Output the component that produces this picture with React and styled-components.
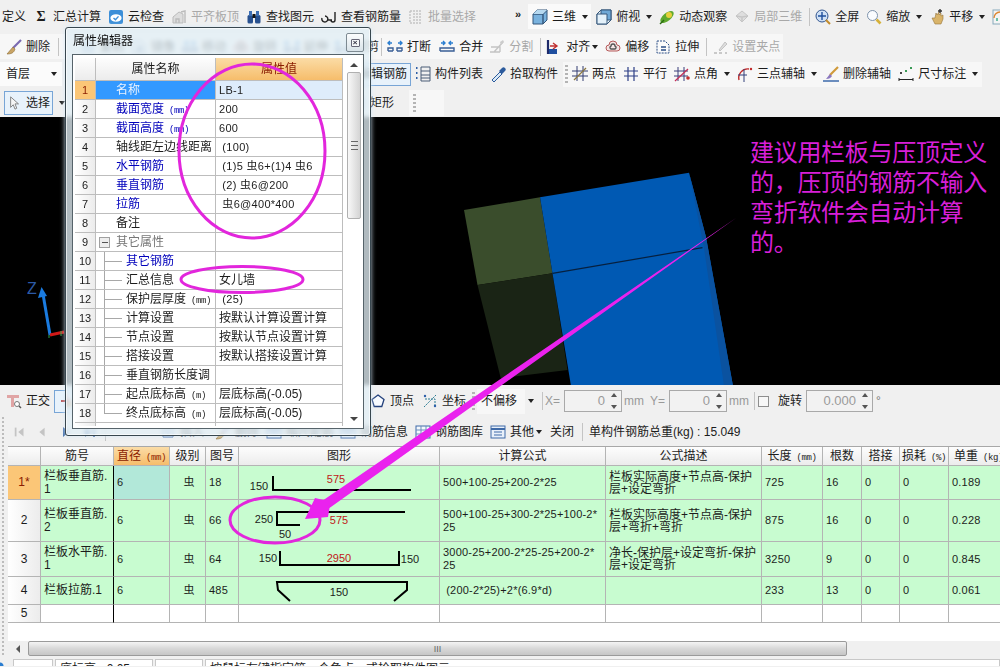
import React from 'react';
import styled, { createGlobalStyle } from 'styled-components';

const Global = createGlobalStyle`
  html, body { margin: 0; padding: 0; width: 1000px; height: 667px; overflow: hidden; background: #f0f0f0; }
  * { box-sizing: border-box; }
`;
const FONT = `"Liberation Sans", "Noto Sans CJK SC", sans-serif`;

const Page = styled.div`
  position: relative; width: 1000px; height: 667px; overflow: hidden;
  display: flex; flex-direction: column; background: #f0f0f0;
  font: 12px/14px ${FONT}; color: #1c1c1c;
`;
const Bar = styled.div`
  flex: none; height: ${p => p.$h}px; display: flex; align-items: center;
  padding-left: ${p => p.$pad || 0}px; background: #f0f0f0; white-space: nowrap;
`;
const Group = styled.div`
  display: flex; align-items: center; height: ${p => p.$h || 25}px; margin-left: ${p => p.$ml || 0}px;
  padding: 0 ${p => p.$pr || 0}px 0 ${p => p.$pl || 0}px;
  background: ${p => p.$bg || '#f7f7f7'}; flex: none;
`;
const ToolWrap = styled.span`
  display: inline-flex; align-items: center; gap: 4px; flex: none;
  margin-left: ${p => p.$ml || 0}px; color: ${p => (p.$off ? '#a8a8a8' : '#1c1c1c')};
`;
const Glyph = styled.svg`flex: none; width: ${p => p.$s || 16}px; height: ${p => p.$s || 16}px; display: block; margin-left: ${p => p.$ml || 0}px;`;
const CaretMark = styled.i`
  flex: none; width: 0; height: 0; margin-left: ${p => p.$ml ?? 6}px; margin-right: ${p => p.$mr ?? 1}px;
  border: 3px solid transparent; border-top: 4px solid #222; border-bottom: 0;
`;
const Sep = styled.i`flex: none; width: 1px; height: 18px; margin-left: ${p => p.$ml || 0}px; background: #c4c4c4;`;
const Grip = styled.i`
  flex: none; width: 3px; height: 18px; margin-left: ${p => p.$ml || 0}px;
  background: repeating-linear-gradient(to bottom, #b4b4b4 0 2px, transparent 2px 4px);
`;
const Sigma = styled.b`flex: none; width: 12px; margin-left: ${p => p.$ml}px; font: bold 14px "Liberation Serif", serif; text-align: center;`;
const More = styled.b`flex: none; width: 9px; margin-left: ${p => p.$ml}px; font: bold 11px/10px "Liberation Sans", sans-serif; margin-top: -6px;`;
const Plain = styled.span`
  flex: none; margin-left: ${p => p.$ml || 0}px; width: ${p => (p.$w ? p.$w + 'px' : 'auto')};
  color: ${p => p.$c || '#1c1c1c'};
`;
const Combo = styled.div`
  flex: none; width: ${p => p.$w}px; height: 24px; margin-left: ${p => p.$ml || 0}px; padding: 0 4px 0 6px;
  display: flex; align-items: center; justify-content: space-between; background: #fbfbfb;
`;
const Selected = styled.div`
  flex: none; display: flex; align-items: center; height: ${p => p.$h || 23}px; margin-left: ${p => p.$ml || 0}px;
  padding: 0 ${p => p.$pr ?? 3}px 0 ${p => p.$pl ?? 5}px; gap: 4px;
  border: 1px solid #78a5d6; background: #e8f2fb;
`;
const NumBox = styled.div`
  flex: none; width: ${p => p.$w}px; height: 22px; margin-left: ${p => p.$ml}px; padding-right: 4px;
  display: flex; align-items: center; justify-content: flex-end; gap: 5px;
  border: 1px solid #a9a9a9; background: #f2f2f2; color: #9a9a9a; font-size: 13px;
`;
const Spin = styled.span`
  width: 7px; height: 16px; flex: none; display: flex; flex-direction: column; justify-content: space-between; align-items: center;
  &::before, &::after { content: ''; border: 3px solid transparent; }
  &::before { border-top: 0; border-bottom: 4px solid #555; }
  &::after { border-bottom: 0; border-top: 4px solid #555; }
`;
const Check = styled.i`flex: none; width: 11px; height: 11px; margin-left: ${p => p.$ml}px; border: 1px solid #8e8e8e; background: #f7f7f7;`;

const Viewport = styled.div`flex: none; height: 268px; background: #000; position: relative; overflow: hidden;`;
const Scene = styled.svg`display: block; width: 1000px; height: 268px;`;
const Axis = styled.text`font: 16px "Liberation Sans", sans-serif; fill: #2c5aa6;`;
const Note = styled.div`
  position: absolute; left: 750px; top: 19px; width: 245px;
  font: 24px/30px "Noto Sans CJK SC", sans-serif; letter-spacing: -0.3px; color: #d81fd8;
`;

const Lower = styled.div`flex: none; display: flex; height: 241px;`;
const Gutter = styled.div`
  flex: none; width: 8px; padding-left: 2px; display: flex;
  &::before { content: ''; width: 2px; height: 100%; background: repeating-linear-gradient(to bottom, #bcbcbc 0 2px, transparent 2px 4px); }
`;
const LowerMain = styled.div`flex: 1; min-width: 0; display: flex; flex-direction: column;`;
const TableArea = styled.div`flex: none; height: 195px; background: #fff; overflow: hidden; border-top: 1px solid #a8a8a8;`;
const Sheet = styled.table`
  table-layout: fixed; width: 1001px; border-collapse: separate; border-spacing: 0;
  font: 12px/13px ${FONT};
`;
const HeadCell = styled.th`
  height: 19px; padding: 0; font-weight: 400; text-align: center; overflow: hidden; white-space: nowrap;
  border-right: 1px solid #b4b4b4; border-bottom: 1px solid #b4b4b4;
  background: ${p => (p.$on ? 'linear-gradient(#fbdca6,#f6bd6b)' : 'linear-gradient(#fdfdfd,#ececec)')};
  color: ${p => (p.$on ? '#8a1c00' : '#1c1c1c')};
`;
const Unit = styled.small`font: 9px "Liberation Mono", monospace; letter-spacing: -0.4px;`;
const RowHead = styled.td`
  padding: 0; text-align: center; font-size: 12px;
  border-right: 1px solid #b4b4b4; border-bottom: 1px solid #b4b4b4;
  background: ${p => (p.$on ? '#fbc677' : 'linear-gradient(90deg,#fff,#ececec)')};
  color: ${p => (p.$on ? '#8a1c00' : '#1c1c1c')};
`;
const Cell = styled.td`
  height: ${p => p.$h}px; padding: 0 0 0 ${p => p.$pl ?? 3}px; white-space: pre; overflow: hidden;
  text-align: ${p => (p.$center ? 'center' : 'left')};
  font-size: ${p => p.$fs || 11}px; line-height: ${p => p.$lh || 13}px; letter-spacing: ${p => p.$ls || 0}px;
  border-right: ${p => (p.$frozen ? '1px solid #000' : '1px solid #b4b4b4')}; border-bottom: 1px solid #b4b4b4;
  background: ${p => p.$bg || (p.$blank ? '#fff' : '#c8fcd0')};
`;
const ShapeSvg = styled.svg`
  display: block; width: 200px;
  text { font: 11px "Liberation Sans", sans-serif; fill: #1c1c1c; text-anchor: middle; }
  path { fill: none; stroke: #000; stroke-width: 2; }
`;
const RedDim = styled.text`&& { fill: #c01818; }`;

const HScroll = styled.div`
  flex: none; height: 16px; display: flex; background: #f0f0f0; border-bottom: 1px solid #b8b8b8;
`;
const ScrollArrow = styled.div`
  flex: none; width: 20px; display: flex; align-items: center; justify-content: center; background: #f0f0f0;
  &::before { content: ''; border: 4px solid transparent; border-left: 0; border-right: 4px solid #555; }
`;
const ScrollThumb = styled.div`
  flex: none; width: 819px; border: 1px solid #9a9a9a; border-radius: 2px; background: linear-gradient(#f4f4f4,#d8d8d8 50%,#c6c6c6);
  display: flex; align-items: center; justify-content: center; color: #666; font: 9px/10px "Liberation Sans", sans-serif;
`;
const Status = styled.div`
  flex: none; height: 10px; margin-top: -2px; display: flex; gap: 2px; padding: 3px 0 0 13px; overflow: hidden;
  background: radial-gradient(circle at 0 100%, #2a7dd0 3px, transparent 4px), #f0f0f0;
`;
const StatusCell = styled.div`
  flex: none; width: ${p => p.$w ? p.$w + 'px' : 'auto'}; flex-grow: ${p => p.$w ? 0 : 1}; height: 20px; padding: 2px 4px 0;
  border: 1px solid #c8c8c8; background: #fff; font-size: 12px; white-space: nowrap;
`;

const Dialog = styled.div`
  position: absolute; left: 65px; top: 27px; width: 306px; height: 409px; padding: 0 6px 6px;
  display: flex; flex-direction: column;
  border: 1px solid #38474f; border-radius: 3px;
  background: rgba(226,238,245,.78); backdrop-filter: blur(2px);
  box-shadow: 0 0 5px rgba(210,232,245,.9), inset 0 0 0 1px rgba(255,255,255,.65);
`;
const TitleBar = styled.div`flex: none; height: 26px; display: flex; align-items: center; justify-content: space-between; color: #111; padding-left: 1px;`;
const Close = styled.div`
  width: 18px; height: 19px; margin-top: 3px; display: flex; align-items: center; justify-content: center;
  border: 1px solid #7d8a92; border-radius: 2px; background: linear-gradient(#fbfdfe,#d9e3e9);
`;
const CloseMark = styled.i`
  width: 9px; height: 8px; border: 1px solid #667; border-radius: 1px; background: #f4f6f8;
  display: flex; align-items: center; justify-content: center; font: bold 8px/6px "Liberation Sans", sans-serif; color: #334;
`;
const Frame = styled.div`
  flex: 1; min-height: 0; display: flex; padding: 2px; gap: 3px;
  border: 1px solid #56636a; outline: 1px solid #fff; outline-offset: -2px; background: #fff;
`;
const GridClip = styled.div`flex: none; width: 268px; margin-top: 1px; height: 368px; overflow: hidden;`;
const PropGrid = styled.table`
  table-layout: fixed; width: 268px; border-collapse: separate; border-spacing: 0; font: 12px/14px ${FONT};
`;
const PHead = styled.th`
  height: 23px; padding: 0; font-weight: 400; text-align: center;
  border-right: 1px solid #bdbdbd; border-bottom: 1px solid #bdbdbd;
  background: ${p => (p.$on ? 'linear-gradient(#fbdca6,#f6bd6b)' : 'linear-gradient(#fdfdfd,#ececec)')};
  color: ${p => (p.$on ? '#8a1c00' : '#1c1c1c')};
`;
const PNum = styled.td`
  height: 19px; padding: 0; text-align: center; font-size: 11px;
  border-right: 1px solid #bdbdbd; border-bottom: 1px solid #bdbdbd;
  background: ${p => (p.$on ? '#fbc677' : 'linear-gradient(90deg,#fff,#ececec)')};
  color: ${p => (p.$on ? '#8a1c00' : '#1c1c1c')};
`;
const PName = styled.td`
  position: relative; padding: 0 0 0 ${p => (p.$tree ? 30 : 20)}px; white-space: nowrap; overflow: hidden;
  border-right: 1px solid #bdbdbd; border-bottom: 1px solid #bdbdbd;
  background: ${p => (p.$on ? '#3399ff' : '#fff')};
  color: ${p => (p.$on ? '#e8f2ff' : p.$muted ? '#777' : p.$link ? '#0000bb' : '#1c1c1c')};
  ${p => p.$tree && `
    &::before { content: ''; position: absolute; left: 8px; top: -1px; bottom: ${p.$last ? '9px' : '-1px'}; width: 18px;
      border-left: 1px solid #a8a8a8; }
    &::after { content: ''; position: absolute; left: 8px; top: 9px; width: 18px; border-top: 1px solid #a8a8a8; }
  `}
`;
const Fold = styled.i`
  position: absolute; left: 3px; top: 4px; width: 11px; height: 11px; border: 1px solid #a0a0a0; background: #eee;
  display: flex; align-items: center; justify-content: center;
  &::before { content: ''; width: 6px; height: 1px; background: #555; }
`;
const PValue = styled.td`
  padding: 0 0 0 ${p => p.$pl ?? 3}px; white-space: pre; overflow: hidden;
  font-size: ${p => p.$fs || 11}px; letter-spacing: ${p => (p.$fs ? 0 : 0.3)}px;
  border-right: 1px solid #bdbdbd; border-bottom: 1px solid #bdbdbd;
  background: ${p => (p.$on ? '#deecfb' : '#fff')};
`;
const VScroll = styled.div`flex: none; width: 16px; display: flex; flex-direction: column; align-items: center; padding: 6px 0 5px;`;
const ArrowUp = styled.i`flex: none; border: 4px solid transparent; border-top: 0; border-bottom: 4px solid #444;`;
const ArrowDown = styled.i`flex: none; margin-top: auto; border: 4px solid transparent; border-bottom: 0; border-top: 4px solid #444;`;
const VThumb = styled.div`
  flex: none; width: 14px; height: 147px; margin-top: 5px; border: 1px solid #b0b0b0; border-radius: 2px;
  background: linear-gradient(90deg,#f8f8f8,#d4d4d4); display: flex; align-items: center; justify-content: center;
  &::before { content: ''; width: 7px; height: 7px; border-top: 1px solid #666; border-bottom: 1px solid #666;
    background: linear-gradient(#666,#666) center/100% 1px no-repeat; }
`;
const Overlay = styled.svg`position: absolute; left: 0; top: 0; width: 1000px; height: 667px; pointer-events: none;`;

const S = { fill: 'none', strokeWidth: 1.4 };
const ICONS = {
  cloud: <><rect x="1" y="1" width="14" height="14" rx="2" fill="#3d8fd8"/><ellipse cx="8" cy="9" rx="5.6" ry="3.8" fill="#fff"/><path d="M5.5 9l2 1.8 3-3.4" {...S} stroke="#3d8fd8"/></>,
  level: <><path d="M2 14V8l6-5 4 2v9z" fill="#ddd" stroke="#bbb"/><path d="M5 14v-4h3v4M10 3l4-1v12" {...S} stroke="#bbb"/></>,
  binoc: <><rect x="1.5" y="6" width="5.5" height="8.5" rx="1.5" fill="#27508f"/><rect x="9" y="6" width="5.5" height="8.5" rx="1.5" fill="#27508f"/><rect x="3" y="2" width="3" height="5" fill="#3c6eb4"/><rect x="10" y="2" width="3" height="5" fill="#3c6eb4"/><rect x="6.5" y="5" width="3" height="4" fill="#111"/></>,
  rebar: <path d="M1 9a3 3 0 1 0 3-2M7 11h4M14 3v8a2 2 0 0 1-4 0" {...S} stroke="#222"/>,
  batch: <><path d="M2 2h11M2 2v12h11M5 5h8M5 8h8M5 11h8" {...S} stroke="#c4c4c4" strokeDasharray="2 1"/></>,
  cube: <><path d="M1 5l4-4h10v10l-4 4H1z" fill="#79b2de" stroke="#34567a"/><path d="M1 5h10v10M11 5l4-4" {...S} stroke="#34567a"/><path d="M1 5l4-4h10l-4 4z" fill="#b6d9f0"/></>,
  cube2: <><path d="M1 5l4-4h10v10l-4 4H1z" fill="#edf6fc" stroke="#34567a"/><path d="M5 1h10v10H5z" fill="#6fa8d6" stroke="#34567a"/><path d="M1 5h10v10H1z" fill="#e4f1fa" stroke="#34567a"/></>,
  orbit: <><ellipse cx="8" cy="8" rx="8" ry="4" transform="rotate(-40 8 8)" fill="#5fa92e"/><circle cx="10" cy="6" r="3" fill="#e6cf3a"/><path d="M1 15L5 11" {...S} stroke="#2a6d12"/></>,
  local3d: <><path d="M8 2l6 5-6 6-6-6z" fill="#dedede" stroke="#c6c6c6"/><path d="M2 7l6 1 6-1M8 8v5" {...S} stroke="#c6c6c6"/></>,
  zoomAll: <><circle cx="7" cy="7" r="6" fill="#cfe0f5" stroke="#31558f"/><path d="M7 3v8M3 7h8" {...S} stroke="#1f4f9c"/><path d="M11 11l4 4" strokeWidth="2" stroke="#c28b2c"/></>,
  zoomIn: <><circle cx="6.5" cy="6.5" r="5" fill="#fafcff" stroke="#7e93ac"/><path d="M10.5 10.5l4 4" strokeWidth="2.6" stroke="#d6b13a"/></>,
  pan: <><path d="M3 9l3 6h6l2-5V6l-2 1V4l-2 2V3L8 6 7 4 6 9z" fill="#d9b46a" stroke="#97763a" strokeWidth=".6"/><path d="M11 0v4M9 2h4" {...S} stroke="#333"/></>,
  palette: <><rect x="1" y="1" width="14" height="14" fill="#f4f4f4" stroke="#8ab"/><path d="M2 9a6 6 0 0 1 12 0" {...S} stroke="#d83"/><path d="M5 12v-3M9 12v-5" {...S} stroke="#3a8"/></>,
  brush: <><path d="M15 1L7 9" strokeWidth="2.2" stroke="#7a6ab0"/><path d="M7 8L1 15c4 0 7-1 8-5z" fill="#c9a465" stroke="#8b6b33" strokeWidth=".6"/></>,
  brushLine: <><path d="M15 1L7 9" strokeWidth="2.2" stroke="#d09a3a"/><path d="M7 8l-4 5c3 0 5-1 6-3z" fill="#8b78bf"/><path d="M0 15h16" strokeWidth="1.4" stroke="#2f5fa5"/></>,
  cut: <><path d="M1 12V9h5v3M10 12V9h5v3M1 12h5M10 12h5" {...S} stroke="#3a5f96"/><path d="M1 4h4M3 2L1 4l2 2M15 4h-4M13 2l2 2-2 2" {...S} stroke="#2a7dd0"/></>,
  merge: <><path d="M1 12V9h14v3H1" {...S} stroke="#3a5f96"/><path d="M2 4h4M4 2l2 2-2 2M14 4h-4M12 2l-2 2 2 2" {...S} stroke="#2a7dd0"/></>,
  split: <><path d="M1 13h10M2 8h9v5M5 13l9-10" {...S} stroke="#c4c4c4"/><path d="M11 3l3-2 1 2-3 3z" fill="#ccc"/></>,
  alignL: <><path d="M2 1v14" strokeWidth="2.2" stroke="#1e2a6a"/><rect x="3" y="10" width="8" height="5" fill="#1f4fa0"/><path d="M4 7h7M7 4l4 3-4 3" {...S} stroke="#c03030"/></>,
  offset: <><path d="M4 12a3 3 0 0 1 0-6 4 4 0 0 1 8 0 3 3 0 0 1 0 6z" fill="#f5e4e4" stroke="#b65b5b"/><path d="M6 10a1.600 1.600 0 0 1 0-3 2 2 0 0 1 4 0 1.600 1.600 0 0 1 0 3z" {...S} stroke="#555"/></>,
  stretch: <><path d="M2 2h8l4 4v8H2z" fill="#fbfbfb" stroke="#2c4f86" strokeDasharray="2 1"/><path d="M6 8h5M6 11h5" {...S} stroke="#2c4f86"/></>,
  handle: <><path d="M2 14h3M7 14h3M13 14h2" {...S} stroke="#bbb"/><path d="M7 11l6-8 2 2-7 7z" fill="#ddd" stroke="#c4c4c4"/></>,
  list: <><path d="M1 2h2M1 7h2M1 12h2" strokeWidth="2" strokeDasharray="1.500 1" stroke="#2f5fa5"/><path d="M6 1h9v14H6zM6 5h9M6 9h9M6 12h9" fill="none" strokeWidth="1" stroke="#4a5d76"/></>,
  picker: <><path d="M2 14l8-8 2 2-8 8z" fill="#d9e9f7" stroke="#2c5b9c"/><path d="M9 5l3-3a2 2 0 0 1 3 3l-3 3z" fill="#2c5b9c"/></>,
  twoPt: <><path d="M5 0v15M11 0v15M0 5h16M0 10h16" strokeWidth="1" stroke="#323c70"/><path d="M2 14L14 2" strokeWidth="1.300" stroke="#8c7840"/></>,
  parallel: <path d="M5 1v14M11 1v14M1 5h14M1 10h14" strokeWidth="1.200" stroke="#2d3f86"/>,
  angle: <><path d="M4 1v14M10 1v14M0 5h14M0 10h14" strokeWidth="1" stroke="#3a3f7a"/><path d="M1 15L14 3" strokeWidth="1.200" stroke="#c42f58"/><circle cx="14" cy="12" r="1.800" fill="#c42f30"/></>,
  three: <><path d="M2 14A9 9 0 0 1 12 3" {...S} stroke="#c02b2b"/><path d="M7 3v13M1 9h9" strokeWidth="1" stroke="#33417a"/><circle cx="14" cy="3" r="1.200" fill="#c02b2b"/></>,
  dim: <><path d="M1 12v3M15 12v3M1 13.500h14" strokeWidth="1" stroke="#222"/><rect x="2" y="6" width="2" height="2" fill="#444"/><rect x="12" y="1" width="2" height="2" fill="#3a9a55"/><rect x="7" y="4" width="2" height="2" fill="#3a9a55"/></>,
  cursor: <path d="M3 1v12l3-3 2 5 2-1-2-5h4z" fill="#f6f6f6" stroke="#777"/>,
  ortho: <><path d="M1 2h12v3H8v9H5V5H1z" fill="#e0a4a4"/><circle cx="11" cy="11" r="2.500" fill="#fff" stroke="#777"/><path d="M13 13l2 2" {...S} stroke="#555"/></>,
  snap: <><path d="M8 1v14M3 8h10" strokeWidth="1.400" stroke="#a82020"/><rect x="9" y="9" width="5" height="5" fill="#c9a465"/></>,
  vertex: <path d="M8 2l6 4.500-2.200 7H4.200L2 6.500z" fill="#f8fbff" strokeWidth="1.300" stroke="#23417c"/>,
  coord: <><path d="M2 14L8 8l6-6M3 6h10v8" fill="none" strokeWidth="1" strokeDasharray="2 1" stroke="#2d7c94"/><circle cx="3" cy="3" r="1.200" fill="#2d5fa8"/><circle cx="13" cy="13" r="1.200" fill="#2d5fa8"/></>,
  info: <><rect x="1" y="2" width="14" height="12" fill="#e8f0fa" stroke="#3f6aa8"/><path d="M1 5h14" strokeWidth="2" stroke="#3f6aa8"/><path d="M4 8h8M4 11h8" strokeWidth="1" stroke="#3f6aa8"/></>,
  table: <><rect x="1" y="2" width="14" height="12" fill="#f4f8fc" stroke="#3f6aa8"/><path d="M1 6h14M1 10h14M6 2v12M11 2v12" strokeWidth="1" stroke="#6a8dbc"/></>,
  first: <><path d="M3 3v10" strokeWidth="2" stroke="#c4c4c4"/><path d="M12 3v10L6 8z" fill="#c4c4c4"/></>,
  prev: <path d="M11 3v10L5 8z" fill="#c4c4c4"/>,
  next: <path d="M5 3v10l6-5z" fill="#3f6aa8"/>,
  last: <><path d="M13 3v10" strokeWidth="2" stroke="#3f6aa8"/><path d="M4 3v10l6-5z" fill="#3f6aa8"/></>,
  add: <path d="M3 3h10v10H3zM8 5v6M5 8h6" fill="#f4f8fc" strokeWidth="1" stroke="#3f6aa8"/>,
};
const Icon = ({ name, size, ml }) => <Glyph $s={size} $ml={ml} viewBox="0 0 16 16">{ICONS[name]}</Glyph>;

const Tool = ({ icon, label, ml, off, size }) => (
  <ToolWrap $ml={ml} $off={off}>
    {icon && <Icon name={icon} size={size} />}
    {label && <span>{label}</span>}
  </ToolWrap>
);
const Caret = CaretMark;
const Rebar = () => <>虫</>;

const Toolbar1 = () => (
  <Bar $h={33} $pad={2}>
    <Tool label="定义" />
    <Sigma $ml={9}>Σ</Sigma>
    <Tool label="汇总计算" ml={6} />
    <Tool icon="cloud" label="云检查" ml={7} />
    <Tool icon="level" label="平齐板顶" ml={7} off />
    <Tool icon="binoc" label="查找图元" ml={7} />
    <Tool icon="rebar" label="查看钢筋量" ml={7} />
    <Tool icon="batch" label="批量选择" ml={7} off />
    <More $ml={39}>»</More>
    <Group $ml={4} $pl={4} $pr={2} $bg="#fafafa">
      <Tool icon="cube" label="三维" />
      <Caret />
    </Group>
    <Tool icon="cube2" label="俯视" ml={5} />
    <Caret />
    <Tool icon="orbit" label="动态观察" ml={6} />
    <Tool icon="local3d" label="局部三维" ml={7} off />
    <Sep $ml={7} />
    <Tool icon="zoomAll" label="全屏" ml={5} />
    <Tool icon="zoomIn" label="缩放" ml={7} />
    <Caret />
    <Tool icon="pan" label="平移" ml={6} />
    <Caret />
    <Tool icon="palette" ml={6} />
  </Bar>
);
const Toolbar2 = () => (
  <Bar $h={27}>
    <Group $pl={6} $pr={3}>
      <Tool icon="brush" label="删除" />
      <Sep $ml={8} />
      <Tool icon="add" label="复制" ml={21} />
      <Tool icon="stretch" label="镜像" ml={7} />
      <Tool icon="merge" label="移动" ml={7} />
      <Tool icon="offset" label="旋转" ml={7} />
      <Tool icon="cut" label="延伸" ml={7} />
      <Tool icon="cut" label="修剪" ml={7} />
      <Sep $ml={2} />
      <Tool icon="cut" label="打断" ml={5} />
      <Tool icon="merge" label="合并" ml={8} />
      <Tool icon="split" label="分割" ml={6} off />
      <Sep $ml={7} />
      <Tool icon="alignL" label="对齐" ml={5} />
      <Caret $ml={2} />
      <Tool icon="offset" label="偏移" ml={6} />
      <Tool icon="stretch" label="拉伸" ml={6} />
      <Sep $ml={7} />
      <Tool icon="handle" label="设置夹点" ml={5} off />
    </Group>
  </Bar>
);
const Toolbar3 = () => (
  <Bar $h={28}>
    <Combo $w={62}>首层<Caret /></Combo>
    <Selected $ml={271}><Tool icon="add" label="编辑钢筋" /></Selected>
    <Tool icon="list" label="构件列表" ml={4} />
    <Tool icon="picker" label="拾取构件" ml={7} />
    <Group $ml={5} $pl={2} $pr={3}>
      <Grip />
      <Tool icon="twoPt" label="两点" ml={4} />
      <Tool icon="parallel" label="平行" ml={7} />
      <Tool icon="angle" label="点角" ml={7} />
      <Caret />
      <Tool icon="three" label="三点辅轴" ml={6} />
      <Caret />
      <Tool icon="brushLine" label="删除辅轴" ml={5} />
      <Tool icon="dim" label="尺寸标注" ml={7} />
      <Caret />
    </Group>
  </Bar>
);
const Toolbar4 = () => (
  <Bar $h={29} $pad={4}>
    <Selected $h={24} $pl={3} $pr={2}><Icon name="cursor" size={14} /><span>选择</span></Selected>
    <Caret />
    <Tool icon="add" label="矩形" ml={284} />
    <Group $ml={15} $pl={4} $pr={28} $h={26}><Grip /></Group>
  </Bar>
);
const Toolbar5 = () => (
  <Bar $h={32} $pad={6}>
    <Tool icon="ortho" />
    <Plain $ml={4}>正交</Plain>
    <Selected $ml={4} $pl={3} $pr={60}><Icon name="snap" /></Selected>
    <Tool icon="vertex" label="顶点" ml={235} />
    <Tool icon="coord" label="坐标" ml={8} />
    <Grip $ml={6} />
    <Group $ml={2} $pl={4} $pr={8}><span>不偏移</span></Group>
    <Caret $ml={3} />
    <Sep $ml={7} />
    <Plain $ml={2} $w={17} $c="#999">X=</Plain>
    <NumBox $ml={2} $w={58}>0<Spin /></NumBox>
    <Plain $ml={2} $w={22} $c="#999">mm</Plain>
    <Plain $ml={4} $w={17} $c="#999">Y=</Plain>
    <NumBox $ml={2} $w={58}>0<Spin /></NumBox>
    <Plain $ml={2} $w={22} $c="#999">mm</Plain>
    <Sep $ml={3} />
    <Check $ml={3} />
    <Plain $ml={9} $w={24}>旋转</Plain>
    <NumBox $ml={4} $w={67}>0.000<Spin /></NumBox>
    <Plain $ml={3} $c="#777">°</Plain>
  </Bar>
);
const Toolbar6 = () => (
  <Bar $h={29}>
    <Icon name="first" size={14} ml={5} />
    <Icon name="prev" size={14} ml={8} />
    <Icon name="next" ml={9} />
    <Icon name="last" ml={7} />
    <Sep $ml={8} />
    <Tool icon="add" label="插入" ml={54} />
    <Tool icon="brush" label="删除" ml={11} />
    <Tool icon="info" label="缩尺配筋" ml={7} />
    <Tool icon="info" label="钢筋信息" ml={6} />
    <Tool icon="table" label="钢筋图库" ml={7} />
    <Tool icon="info" label="其他" ml={7} />
    <Caret $ml={2} />
    <Plain $ml={7}>关闭</Plain>
    <Sep $ml={8} />
    <Plain $ml={6}>单构件钢筋总重(kg) : 15.049</Plain>
  </Bar>
);

const Shape1 = () => (
  <ShapeSvg height="33" viewBox="0 0 200 33">
    <text x="20" y="24">150</text><RedDim x="97" y="17">575</RedDim>
    <path d="M34 10V24H172" />
  </ShapeSvg>
);
const Shape2 = () => (
  <ShapeSvg height="41" viewBox="0 0 200 41">
    <text x="25" y="23">250</text><RedDim x="100" y="24">575</RedDim><text x="46" y="38">50</text>
    <path d="M166 12H38V25H61" />
  </ShapeSvg>
);
const Shape3 = () => (
  <ShapeSvg height="34" viewBox="0 0 200 34">
    <text x="29" y="20">150</text><RedDim x="100" y="20">2950</RedDim><text x="171" y="21">150</text>
    <path d="M41 9V23H160V9" />
  </ShapeSvg>
);
const Shape4 = () => (
  <ShapeSvg height="27" viewBox="0 0 200 27">
    <text x="100" y="19">150</text>
    <path d="M51 24L39 13L38 5H168V13L155 24" />
  </ShapeSvg>
);

const HEADS = [
  ['', 33], ['筋号', 73], ['直径', 56, 'mm', true], ['级别', 36], ['图号', 33], ['图形', 201], ['计算公式', 166],
  ['公式描述', 156], ['长度', 61, 'mm'], ['根数', 39], ['搭接', 38], ['损耗', 49, '%'], ['单重', 60, 'kg'],
];
const ROWS = [
  { h: 33, n: '1*', on: true, name: '栏板垂直筋.\n1', code: '18', Shape: Shape1, f: '500+100-25+200-2*25', desc: '栏板实际高度+节点高-保护\n层+设定弯折', len: '725', cnt: '16', wt: '0.189' },
  { h: 41, n: '2', name: '栏板垂直筋.\n2', code: '66', Shape: Shape2, f: '500+100-25+300-2*25+100-2*\n25', desc: '栏板实际高度+节点高-保护\n层+弯折+弯折', len: '875', cnt: '16', wt: '0.228' },
  { h: 34, n: '3', name: '栏板水平筋.\n1', code: '64', Shape: Shape3, f: '3000-25+200-2*25-25+200-2*\n25', desc: '净长-保护层+设定弯折-保护\n层+设定弯折', len: '3250', cnt: '9', wt: '0.845' },
  { h: 27, n: '4', name: '栏板拉筋.1', code: '485', Shape: Shape4, f: ' (200-2*25)+2*(6.9*d)', desc: '', len: '233', cnt: '13', wt: '0.061' },
];
const NUM = { $fs: 11, $ls: 0.2 };

const RebarTable = () => (
  <TableArea>
    <Sheet>
      <colgroup>{HEADS.map((c, i) => <col key={i} width={c[1]} />)}</colgroup>
      <thead>
        <tr>{HEADS.map((c, i) => (
          <HeadCell key={i} $on={c[3]}>{c[0]}{c[2] && <Unit> ({c[2]})</Unit>}</HeadCell>
        ))}</tr>
      </thead>
      <tbody>
        {ROWS.map(r => (
          <tr key={r.n}>
            <RowHead $on={r.on}>{r.n}</RowHead>
            <Cell $h={r.h} $fs={12} $frozen>{r.name}</Cell>
            <Cell {...NUM} $bg={r.on ? '#b2e8d9' : undefined}>6</Cell>
            <Cell $center $fs={11}><Rebar /></Cell>
            <Cell {...NUM}>{r.code}</Cell>
            <Cell $pl={0}><r.Shape /></Cell>
            <Cell {...NUM}>{r.f}</Cell>
            <Cell $fs={12} $lh={12}>{r.desc}</Cell>
            <Cell {...NUM}>{r.len}</Cell>
            <Cell {...NUM}>{r.cnt}</Cell>
            <Cell {...NUM}>0</Cell>
            <Cell {...NUM}>0</Cell>
            <Cell {...NUM}>{r.wt}</Cell>
          </tr>
        ))}
        <tr>
          <RowHead>5</RowHead>
          <Cell $h={18} $blank $frozen />
          {Array.from({ length: 11 }, (_, i) => <Cell key={i} $blank />)}
        </tr>
      </tbody>
    </Sheet>
  </TableArea>
);

const PROPS = [
  { n: 1, name: '名称', val: 'LB-1', link: true, on: true },
  { n: 2, name: '截面宽度', unit: 'mm', val: '200', link: true },
  { n: 3, name: '截面高度', unit: 'mm', val: '600', link: true },
  { n: 4, name: '轴线距左边线距离', val: ' (100)' },
  { n: 5, name: '水平钢筋', val: ' (1)5 虫6+(1)4 虫6', link: true },
  { n: 6, name: '垂直钢筋', val: ' (2) 虫6@200', link: true },
  { n: 7, name: '拉筋', val: ' 虫6@400*400', link: true },
  { n: 8, name: '备注', val: '' },
  { n: 9, name: '其它属性', val: '', group: true },
  { n: 10, name: '其它钢筋', val: '', tree: true, link: true },
  { n: 11, name: '汇总信息', val: '女儿墙', tree: true, big: true },
  { n: 12, name: '保护层厚度', unit: 'mm', val: ' (25)', tree: true },
  { n: 13, name: '计算设置', val: '按默认计算设置计算', tree: true, big: true },
  { n: 14, name: '节点设置', val: '按默认节点设置计算', tree: true, big: true },
  { n: 15, name: '搭接设置', val: '按默认搭接设置计算', tree: true, big: true },
  { n: 16, name: '垂直钢筋长度调', val: '', tree: true },
  { n: 17, name: '起点底标高', unit: 'm', val: '层底标高(-0.05)', tree: true, big: true },
  { n: 18, name: '终点底标高', unit: 'm', val: '层底标高(-0.05)', tree: true, big: true, last: true },
];

const PropertyDialog = () => (
  <Dialog>
    <TitleBar><span>属性编辑器</span><Close><CloseMark>×</CloseMark></Close></TitleBar>
    <Frame>
      <GridClip>
        <PropGrid>
          <colgroup><col width="21" /><col width="120" /><col width="127" /></colgroup>
          <thead><tr><PHead /><PHead>属性名称</PHead><PHead $on>属性值</PHead></tr></thead>
          <tbody>
            {PROPS.map(p => (
              <tr key={p.n}>
                <PNum $on={p.on}>{p.n}</PNum>
                <PName $on={p.on} $link={p.link} $tree={p.tree} $last={p.last} $muted={p.group}>
                  {p.group && <Fold />}{p.name}{p.unit && <Unit> ({p.unit})</Unit>}
                </PName>
                <PValue $on={p.on} $fs={p.big ? 12 : undefined}>{p.val}</PValue>
              </tr>
            ))}
            <tr><PNum /><PName /><PValue /></tr>
          </tbody>
        </PropGrid>
      </GridClip>
      <VScroll><ArrowUp /><VThumb /><ArrowDown /></VScroll>
    </Frame>
  </Dialog>
);

const Marks = () => (
  <Overlay viewBox="0 0 1000 667">
    <g fill="none" stroke="#e226dc" strokeWidth="3">
      <ellipse cx="252" cy="151" rx="73" ry="87" />
      <ellipse cx="242" cy="279.500" rx="61" ry="13" />
      <ellipse cx="275" cy="520" rx="45" ry="23" />
    </g>
    <polygon fill="#ea22ee" points="736,218 329.500,508 328,517 305,519 315,498 323.500,500" />
  </Overlay>
);

export default function App() {
  return (
    <Page>
      <Global />
      <Toolbar1 />
      <Toolbar2 />
      <Toolbar3 />
      <Toolbar4 />
      <Viewport>
        <Scene viewBox="0 117 1000 268">
          <polygon fill="#3a4d2c" points="464,210 540,197.300 552.500,273.300 477.500,285" />
          <polygon fill="#1a2415" points="477.500,285 552.500,273.300 567.500,370 500.700,378" />
          <polygon fill="#0059b3" points="540,197.300 689,172.700 706,237 733,386 571,386" />
          <polygon fill="#0a52a0" points="689,172.700 704,248 724,386 733,386 706,237" />
          <line x1="552.500" y1="273.300" x2="702.500" y2="247.700" stroke="#06203f" strokeWidth="1.200" />
          <Axis x="27" y="294">Z</Axis>
          <path d="M50 335L43 294" stroke="#1a7be0" strokeWidth="3" />
          <polygon fill="#1a7be0" points="41.500,287 38,298 47,296" />
          <path d="M50 335L64 332" stroke="#d01818" strokeWidth="3" />
          <path d="M49 335v3M61 331v5" stroke="#2fa84a" strokeWidth="1" />
        </Scene>
        <Note>建议用栏板与压顶定义的，压顶的钢筋不输入弯折软件会自动计算的。</Note>
      </Viewport>
      <Toolbar5 />
      <Lower>
        <Gutter />
        <LowerMain>
          <Toolbar6 />
          <RebarTable />
          <HScroll>
            <ScrollArrow />
            <ScrollThumb>III</ScrollThumb>
          </HScroll>
        </LowerMain>
      </Lower>
      <Status>
        <StatusCell $w={40} />
        <StatusCell $w={98}>底标高: -0.05</StatusCell>
        <StatusCell $w={48} />
        <StatusCell>按鼠标左键指定第一个角点，或拾取构件图元</StatusCell>
      </Status>
      <PropertyDialog />
      <Marks />
    </Page>
  );
}
